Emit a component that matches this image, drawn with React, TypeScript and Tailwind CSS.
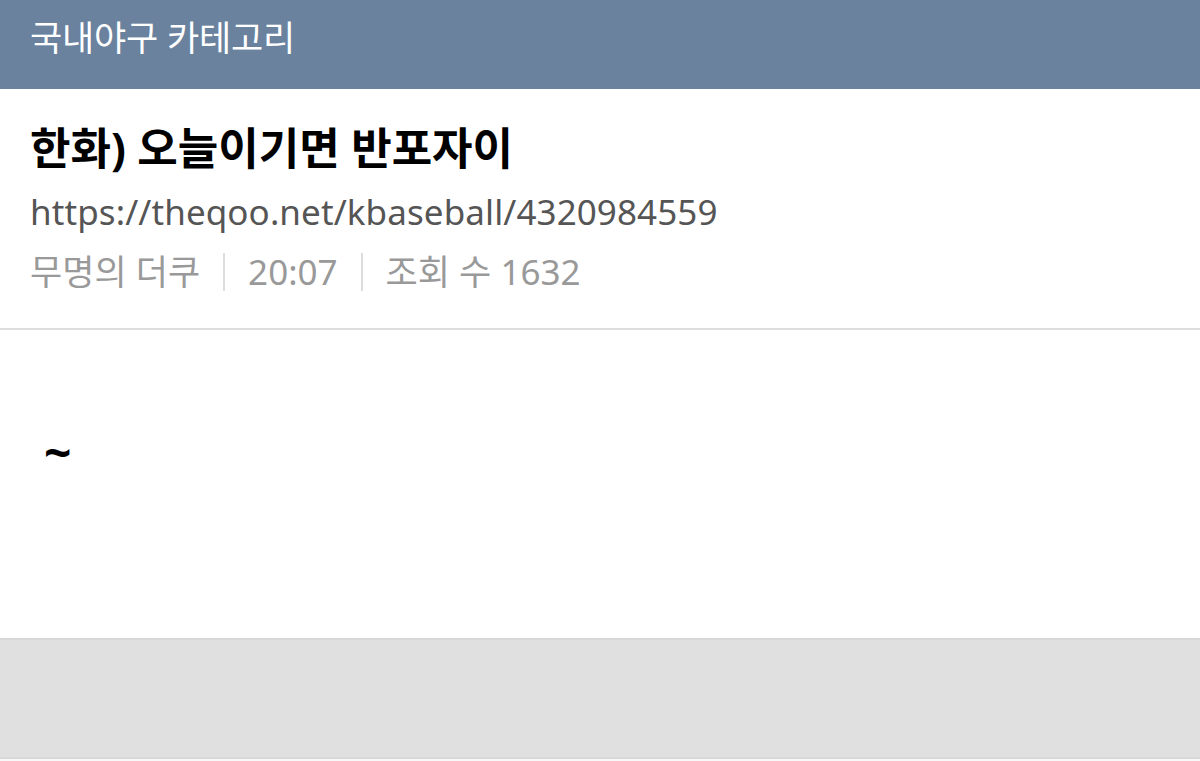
import React from "react";

const App: React.FC = () => {
  return (
    <div
      className="w-[1200px] h-[761px] bg-white flex flex-col overflow-hidden"
      style={{ fontFamily: '"Noto Sans", "Noto Sans CJK KR", sans-serif' }}
    >
      {/* Header */}
      <div className="h-[89px] bg-[#6a829e] flex items-center px-[30px] shrink-0">
        <h1 className="text-[35px] text-white leading-none tracking-[-0.2px] -mt-[14px]">
          국내야구 카테고리
        </h1>
      </div>
      {/* Post info */}
      <div className="px-[30px] pt-[33px] h-[241px] border-b-2 border-[#dddddd] shrink-0">
        <h2 className="text-[44px] font-bold text-black leading-[52px]">
          한화) 오늘이기면 반포자이
        </h2>
        <div className="mt-[16px] text-[35px] text-[#555555] leading-[44px] tracking-[0.1px]">
          https://theqoo.net/kbaseball/4320984559
        </div>
        <div className="mt-[16px] flex items-center text-[35px] text-[#999999] leading-[44px]">
          <span>무명의 더쿠</span>
          <span className="mx-[23px] w-[2px] h-[38px] bg-[#dddddd]" />
          <span>20:07</span>
          <span className="mx-[23px] w-[2px] h-[38px] bg-[#dddddd]" />
          <span>조회 수 1632</span>
        </div>
      </div>
      {/* Body */}
      <div className="h-[308px] px-[44px] pt-[98px] shrink-0">
        <p className="text-[48px] font-bold text-black leading-none">~</p>
      </div>
      {/* Footer */}
      <div className="h-[121px] bg-[#e0e0e0] border-t-2 border-b-2 border-[#d8d8d8] shrink-0" />
      <div className="flex-1 bg-[#f8f8f8]" />
    </div>
  );
};

export default App;
